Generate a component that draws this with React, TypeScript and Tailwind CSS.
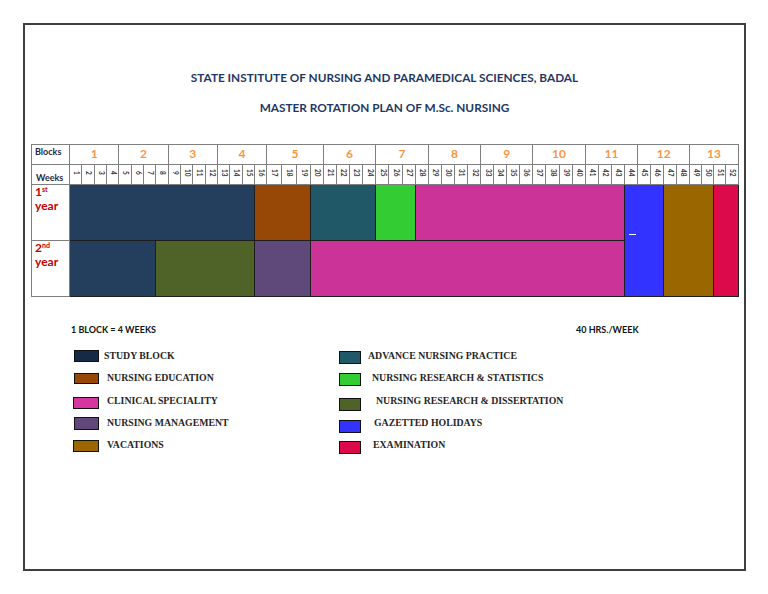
import React from "react";

const blocks = Array.from({ length: 13 }, (_, i) => i + 1);
const weeks = Array.from({ length: 52 }, (_, i) => i + 1);

const firstYear = [
  { span: "col-span-15", bg: "bg-[#243e5e]" },
  { span: "col-span-4", bg: "bg-[#974706]" },
  { span: "col-span-5", bg: "bg-[#215868]" },
  { span: "col-span-3", bg: "bg-[#33cc33]" },
  { span: "col-span-16", bg: "bg-[#cc3399]" },
];

const secondYear = [
  { span: "col-span-7", bg: "bg-[#243e5e]" },
  { span: "col-span-8", bg: "bg-[#4f6228]" },
  { span: "col-span-4", bg: "bg-[#5f497a]" },
  { span: "col-span-24", bg: "bg-[#cc3399]" },
];

const legendLeft = [
  { label: "STUDY BLOCK", bg: "bg-[#172a45]", sw: "w-[25px] h-[12px]", gap: "ml-[5px]" },
  { label: "NURSING EDUCATION", bg: "bg-[#974706]", sw: "w-[25px] h-[11px]", gap: "ml-[8px]" },
  { label: "CLINICAL SPECIALITY", bg: "bg-[#d4359f]", sw: "w-[26px] h-[12px] -ml-[1px] translate-y-[2px]", gap: "ml-[8px]" },
  { label: "NURSING MANAGEMENT", bg: "bg-[#60497a]", sw: "w-[25px] h-[13px]", gap: "ml-[8px]" },
  { label: "VACATIONS", bg: "bg-[#9c6500]", sw: "w-[26px] h-[12px] -ml-[1px]", gap: "ml-[8px]" },
];

const legendRight = [
  { label: "ADVANCE NURSING PRACTICE", bg: "bg-[#215868]", sw: "translate-y-[1px]", gap: "ml-[7px]" },
  { label: "NURSING RESEARCH & STATISTICS", bg: "bg-[#33cc33]", sw: "translate-y-[1px]", gap: "ml-[11px]" },
  { label: "NURSING RESEARCH & DISSERTATION", bg: "bg-[#4f6228]", sw: "translate-y-[4px]", gap: "ml-[15px]" },
  { label: "GAZETTED HOLIDAYS", bg: "bg-[#3333ff]", sw: "translate-y-[3px]", gap: "ml-[13px]" },
  { label: "EXAMINATION", bg: "bg-[#dc0a4b]", sw: "translate-y-[2px]", gap: "ml-[12px]" },
];

const head = "border-r border-b border-[#7f7f7f]";
const bar = "border-r border-b border-[#1e1e1e]";

const YearLabel = ({ n, sup }: { n: string; sup: string }) => (
  <div className={`${head} flex flex-col gap-[1px] pl-[3px] text-[12px] font-bold leading-[13px] text-[#c00000]`}>
    <span className="flex items-start">
      {n}
      <span className="text-[7px] leading-[8px]">{sup}</span>
    </span>
    <span>year</span>
  </div>
);

const App = () => {
  return (
    <div className="h-[594px] w-[768px] bg-white pt-[23px] pl-[23px] font-['Lato',sans-serif]">
      <div className="h-[548px] w-[723px] border-2 border-[#3f3f3f]">
        <h1 className="pt-[45px] text-center text-[11.8px] font-bold leading-[16px] text-[#1f3864]">
          STATE INSTITUTE OF NURSING AND PARAMEDICAL SCIENCES, BADAL
        </h1>
        <h2 className="mt-[14px] text-center text-[11.8px] font-bold leading-[16px] text-[#1f3864]">
          MASTER ROTATION PLAN OF M.Sc. NURSING
        </h2>

        <div className="ml-[6px] mt-[28px] grid w-[708px] grid-cols-[38px_repeat(16,12.34px)_repeat(3,14.67px)_12.6px_repeat(12,13.14px)_repeat(4,12.93px)_repeat(4,13.25px)_repeat(8,13.04px)_repeat(4,12.08px)] grid-rows-[20px_20px_56px_56px] border-l border-t border-[#7f7f7f]">
          <div className={`${head} pl-[3px] pt-[1px] text-[9px] font-bold leading-[11px] text-[#1f2a3c]`}>Blocks</div>
          {blocks.map((b) => (
            <div
              key={b}
              className={`${head} col-span-4 flex justify-center pt-[1px] text-[12px] font-bold leading-[15px] text-[#f79646]`}
            >
              {b}
            </div>
          ))}

          <div className={`${head} flex items-end pb-[1px] pl-[4px] text-[9px] font-bold leading-[11px] text-[#1f2a3c]`}>
            Weeks
          </div>
          {weeks.map((w) => (
            <div key={w} className={`${head} flex items-center justify-center pb-[4px]`}>
              <span className="text-[6.5px] font-bold leading-none text-[#333] [writing-mode:vertical-rl]">{w}</span>
            </div>
          ))}

          <YearLabel n="1" sup="st" />
          {firstYear.map((c, i) => (
            <div key={i} className={`${bar} ${c.span} ${c.bg}`} />
          ))}
          <div className={`${bar} col-span-3 row-span-2 flex items-center bg-[#3333ff] pb-[12px] pl-[4px]`}>
            <span className="h-px w-[7px] bg-white" />
          </div>
          <div className={`${bar} col-span-4 row-span-2 bg-[#996600]`} />
          <div className={`${bar} col-span-2 row-span-2 bg-[#dc0a4b]`} />

          <YearLabel n="2" sup="nd" />
          {secondYear.map((c, i) => (
            <div key={i} className={`${bar} ${c.span} ${c.bg}`} />
          ))}
        </div>

        <div className="mt-[27px] flex pl-[46px] text-[9px] font-bold leading-[12px] text-[#111]">
          <span className="w-[505px]">1 BLOCK = 4 WEEKS</span>
          <span>40 HRS./WEEK</span>
        </div>

        <div className="mt-[9px] flex pl-[49px] font-['Liberation_Serif',serif] text-[9.8px] font-bold text-[#262626]">
          <div className="w-[265px]">
            {legendLeft.map((l) => (
              <div key={l.label} className="flex h-[22.4px] items-center">
                <span className={`${l.sw} ${l.bg} border border-[#111]`} />
                <span className={l.gap}>{l.label}</span>
              </div>
            ))}
          </div>
          <div>
            {legendRight.map((l) => (
              <div key={l.label} className="flex h-[22.4px] items-center">
                <span className={`h-[13px] w-[22px] ${l.sw} ${l.bg} border border-[#111]`} />
                <span className={l.gap}>{l.label}</span>
              </div>
            ))}
          </div>
        </div>
      </div>
    </div>
  );
};

export default App;
